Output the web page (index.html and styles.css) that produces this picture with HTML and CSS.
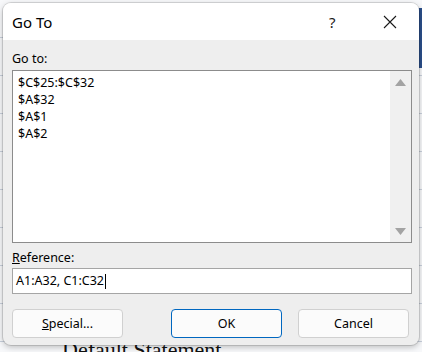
FILE: index.html
```html
<!DOCTYPE html>
<html lang="en">
<head>
    <meta charset="UTF-8">
    <title>Go To</title>
    <link rel="stylesheet" href="styles.css">
</head>
<body>
    <div class="sheet">
        <div class="sheet-bar"></div>
        <div class="sheet-text">Default Statement</div>
    </div>

    <div class="dialog">
        <div class="titlebar">
            <span class="title">Go To</span>
            <span class="help">?</span>
            <span class="close">
                <svg width="14" height="14" viewBox="0 0 14 14">
                    <path d="M1 1 L13 13 M13 1 L1 13" stroke="#1a1a1a" stroke-width="1.1" fill="none"/>
                </svg>
            </span>
        </div>
        <div class="content">
            <div class="label">Go to:</div>
            <div class="listbox">
                <ul class="items">
                    <li>$C$25:$C$32</li>
                    <li>$A$32</li>
                    <li>$A$1</li>
                    <li>$A$2</li>
                </ul>
                <div class="scrollbar">
                    <svg width="11" height="7" viewBox="0 0 11 7"><path d="M5.5 0 L11 7 L0 7 Z" fill="#a3a3a3"/></svg>
                    <svg width="11" height="7" viewBox="0 0 11 7"><path d="M0 0 L11 0 L5.5 7 Z" fill="#a3a3a3"/></svg>
                </div>
            </div>
            <div class="label ref-label"><u>R</u>eference:</div>
            <div class="input">A1:A32, C1:C32<span class="caret"></span></div>
            <div class="buttons">
                <button class="btn"><u>S</u>pecial...</button>
                <div class="spacer"></div>
                <button class="btn primary">OK</button>
                <button class="btn">Cancel</button>
            </div>
        </div>
    </div>
</body>
</html>
```

FILE: styles.css
```css
body {
    margin: 0;
    width: 422px;
    height: 352px;
    overflow: hidden;
    position: relative;
    font-family: "Noto Sans", "Liberation Sans", sans-serif;
    background: #ffffff;
}
.sheet {
    width: 422px;
    height: 352px;
    background:
        repeating-linear-gradient(to bottom, transparent 0, transparent 37px, #c8d0dc 37px, #c8d0dc 38px),
        #f7f8fa;
    position: relative;
}
.sheet-bar {
    position: absolute;
    right: 0;
    top: 8px;
    width: 4px;
    height: 60px;
    background: #2b4f8a;
}
.sheet-text {
    position: absolute;
    left: 62px;
    top: 338px;
    font-family: "Liberation Serif", serif;
    font-size: 22px;
    line-height: 24px;
    color: #111;
}

.dialog {
    position: absolute;
    left: 3px;
    top: 3px;
    width: 416px;
    height: 342px;
    background: #eeeeee;
    border-radius: 8px;
    overflow: hidden;
    box-shadow: 0 0 0 1px rgba(0, 0, 0, 0.12), 0 2px 6px rgba(0, 0, 0, 0.25);
    display: flex;
    flex-direction: column;
}
.titlebar {
    height: 37px;
    background: #ffffff;
    display: flex;
    align-items: center;
    padding-left: 9px;
}
.title {
    font-size: 15px;
    color: #000;
    flex: 1;
}
.help {
    font-size: 15px;
    width: 20px;
    margin-right: 34px;
    color: #1a1a1a;
}
.close {
    width: 14px;
    height: 14px;
    margin-right: 22px;
    display: flex;
}
.content {
    padding: 10px 7px 0 9px;
    display: flex;
    flex-direction: column;
}
.label {
    font-size: 12.5px;
    color: #000;
    height: 20px;
    line-height: 18px;
}
.listbox {
    height: 171px;
    border: 1px solid #8c8c8c;
    background: #ffffff;
    display: flex;
}
.items {
    list-style: none;
    margin: 0;
    padding: 3px 0 0 5px;
    flex: 1;
    font-size: 12.5px;
    line-height: 17px;
    color: #000;
}
.scrollbar {
    width: 21px;
    background: #f0f0f0;
    display: flex;
    flex-direction: column;
    justify-content: space-between;
    align-items: center;
    padding: 8px 0 7px;
}
.ref-label {
    margin-top: 6px;
    height: 19px;
}
.input {
    height: 24px;
    border: 1px solid #a5a5a5;
    background: #ffffff;
    font-size: 12.5px;
    line-height: 24px;
    padding-left: 3px;
    display: flex;
    align-items: center;
}
.caret {
    width: 1px;
    height: 15px;
    background: #000;
    margin-left: 1px;
}
.buttons {
    display: flex;
    margin-top: 15px;
    gap: 16px;
}
.spacer {
    width: 16px;
    flex-shrink: 0;
}
.btn {
    width: 111px;
    height: 29px;
    flex-shrink: 0;
    border: 1px solid #d0d0d0;
    border-radius: 4px;
    background: #fbfbfb;
    font-family: "Noto Sans", "Liberation Sans", sans-serif;
    font-size: 12.5px;
    color: #000;
    padding: 0;
}
.btn.primary {
    border: 1px solid #0067c0;
}
```
